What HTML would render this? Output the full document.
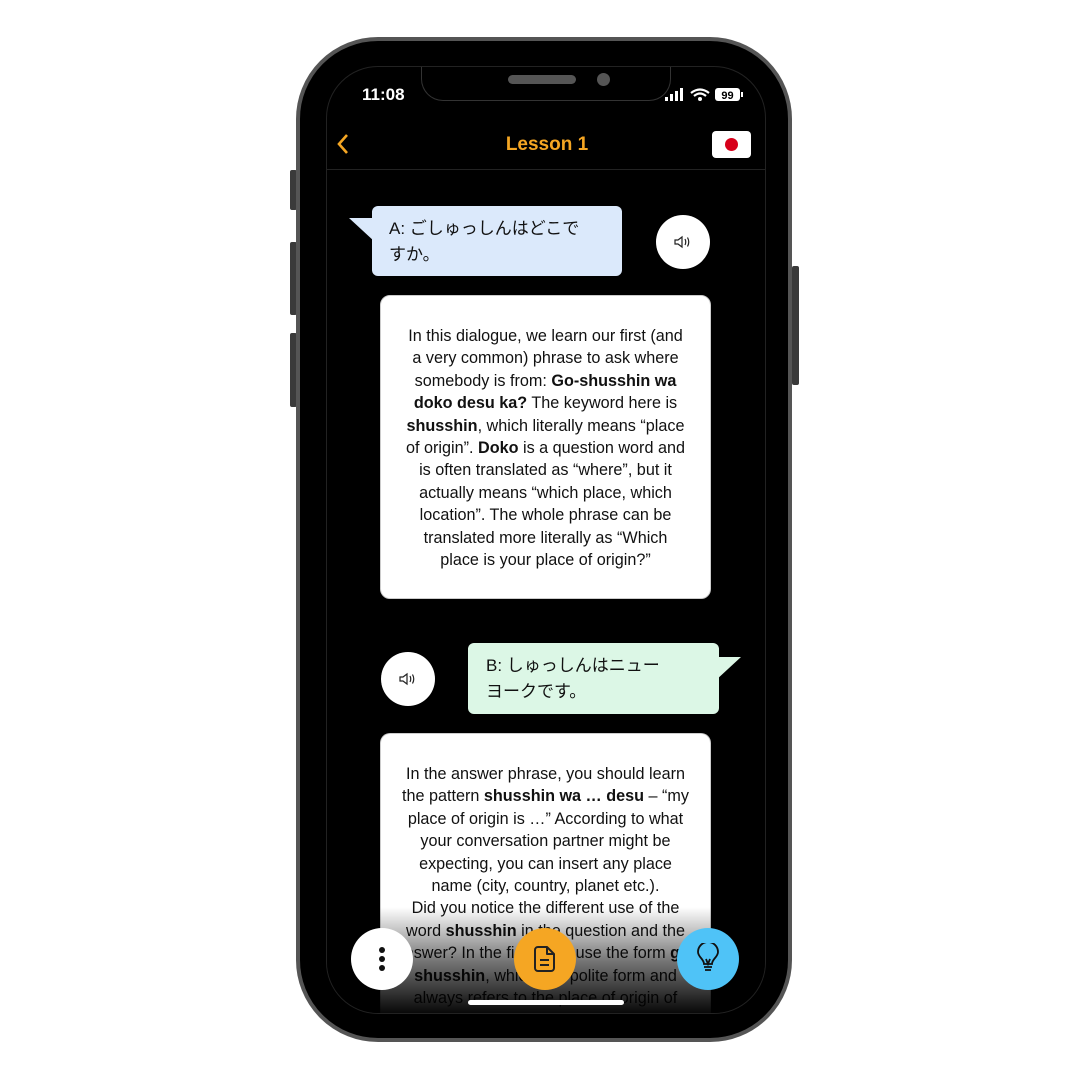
<!DOCTYPE html>
<html><head><meta charset="utf-8"><style>
*{margin:0;padding:0;box-sizing:border-box}
body{width:1080px;height:1080px;background:#fff;position:relative;overflow:hidden;font-family:"Liberation Sans","Noto Sans CJK JP",sans-serif}
.abs{position:absolute}
.phone{left:296px;top:37px;width:496px;height:1005px;border:4px solid #555;border-radius:82px;background:#000}
.btn{background:#3a3a3a;width:7px;border-radius:2px}
.screen{left:326px;top:66px;width:440px;height:948px;background:#000;border-radius:52px;overflow:hidden;border:1px solid #222}
.card{background:#fff;border-radius:10px;border:1px solid #ccc;color:#111;font-size:16.2px;line-height:22.4px;text-align:center;letter-spacing:0;white-space:nowrap}
.circ{border-radius:50%;display:flex;align-items:center;justify-content:center}
.jp{font-size:17px;line-height:26px;color:#111;white-space:nowrap}
</style></head><body>
<div class="abs btn" style="left:290px;top:170px;height:40px"></div>
<div class="abs btn" style="left:290px;top:242px;height:73px"></div>
<div class="abs btn" style="left:290px;top:333px;height:74px"></div>
<div class="abs btn" style="left:792px;top:266px;height:119px"></div>
<div class="abs phone"></div>
<div class="abs screen">
 <div class="abs" style="left:94px;top:-2px;width:250px;height:36px;background:#000;border:1px solid #333;border-top:none;border-radius:0 0 22px 22px"></div>
 <div class="abs" style="left:181px;top:8px;width:68px;height:9px;background:#555;border-radius:5px"></div>
 <div class="abs" style="left:270px;top:6px;width:13px;height:13px;background:#555;border-radius:50%"></div>
 <div class="abs" style="left:35px;top:18px;color:#fff;font-size:17px;font-weight:bold">11:08</div>
 <svg class="abs" style="left:338px;top:20px" width="82" height="16" viewBox="0 0 82 16">
  <rect x="0" y="10" width="3" height="4" fill="#fff"/><rect x="5" y="7" width="3" height="7" fill="#fff"/><rect x="10" y="4" width="3" height="10" fill="#fff"/><rect x="15" y="1" width="3" height="13" fill="#fff"/>
  <path d="M26 6 Q35 -1 44 6" stroke="#fff" stroke-width="2.2" fill="none"/><path d="M29 9 Q35 4 41 9" stroke="#fff" stroke-width="2.2" fill="none"/><circle cx="35" cy="12" r="2" fill="#fff"/>
  <rect x="50" y="1" width="25" height="13" rx="3" fill="#fff"/><rect x="76" y="5" width="2" height="5" fill="#fff"/>
  <text x="62.5" y="12" font-size="11" font-weight="bold" text-anchor="middle" fill="#000" font-family="Liberation Sans">99</text>
 </svg>
 <svg class="abs" style="left:8px;top:66px" width="16" height="24"><path d="M12 2 L4 11 L12 20" stroke="#f5a623" stroke-width="2.6" fill="none"/></svg>
 <div class="abs" style="left:0;width:440px;top:67px;text-align:center;color:#f5a623;font-size:19px;font-weight:bold">Lesson 1</div>
 <div class="abs" style="left:385px;top:64px;width:39px;height:27px;background:#fff;border-radius:4px"><div class="abs" style="left:13px;top:7px;width:13px;height:13px;border-radius:50%;background:#d7001a"></div></div>
 <div class="abs" style="left:0;top:102px;width:440px;height:1px;background:#222"></div>

 <svg class="abs" style="left:22px;top:151px" width="30" height="25"><path d="M0 0 L26 0 L26 24 Z" fill="#dbe9fb"/></svg>
 <div class="abs jp" style="left:45px;top:139px;width:250px;height:70px;background:#dbe9fb;border-radius:6px;padding:10px 17px">A: ごしゅっしんはどこで<br>すか。</div>
 <div class="abs circ" style="left:329px;top:148px;width:54px;height:54px;background:#fff"><svg width="18" height="14" viewBox="0 0 18 14"><path d="M1 5 H4 L8 2 V12 L4 9 H1 Z" stroke="#222" stroke-width="1.2" fill="none"/><path d="M11 4 Q12.5 7 11 10 M13.5 2.5 Q16 7 13.5 11.5" stroke="#222" stroke-width="1.2" fill="none"/></svg></div>

 <div class="abs card" style="left:53px;top:228px;width:331px;height:304px;padding:29px 0">In this dialogue, we learn our first (and<br>a very common) phrase to ask where<br>somebody is from: <b>Go-shusshin wa</b><br><b>doko desu ka?</b> The keyword here is<br><b>shusshin</b>, which literally means “place<br>of origin”. <b>Doko</b> is a question word and<br>is often translated as “where”, but it<br>actually means “which place, which<br>location”. The whole phrase can be<br>translated more literally as “Which<br>place is your place of origin?”</div>

 <div class="abs circ" style="left:54px;top:585px;width:54px;height:54px;background:#fff"><svg width="18" height="14" viewBox="0 0 18 14"><path d="M1 5 H4 L8 2 V12 L4 9 H1 Z" stroke="#222" stroke-width="1.2" fill="none"/><path d="M11 4 Q12.5 7 11 10 M13.5 2.5 Q16 7 13.5 11.5" stroke="#222" stroke-width="1.2" fill="none"/></svg></div>
 <svg class="abs" style="left:388px;top:590px" width="28" height="25"><path d="M26 0 L0 0 L0 24 Z" fill="#dcf7e6"/></svg>
 <div class="abs jp" style="left:141px;top:576px;width:251px;height:71px;background:#dcf7e6;border-radius:6px;padding:10px 18px">B: しゅっしんはニュー<br>ヨークです。</div>

 <div class="abs card" style="left:53px;top:666px;width:331px;height:320px;padding:29px 0;border-bottom:none;border-radius:10px 10px 0 0">In the answer phrase, you should learn<br>the pattern <b>shusshin wa … desu</b> – “my<br>place of origin is …” According to what<br>your conversation partner might be<br>expecting, you can insert any place<br>name (city, country, planet etc.).<br>Did you notice the different use of the<br>word <b>shusshin</b> in the question and the<br>answer? In the first case use the form <b>go-</b><br><b>shusshin</b>, which is a polite form and<br>always refers to the place of origin of</div>
 <div class="abs" style="left:0;top:840px;width:440px;height:110px;background:linear-gradient(to bottom,rgba(0,0,0,0),rgba(0,0,0,0.55) 50%,rgba(0,0,0,1) 100%)"></div>

 <div class="abs circ" style="left:24px;top:861px;width:62px;height:62px;background:#fff"><svg width="8" height="26"><circle cx="4" cy="4" r="3" fill="#111"/><circle cx="4" cy="13" r="3" fill="#111"/><circle cx="4" cy="22" r="3" fill="#111"/></svg></div>
 <div class="abs circ" style="left:187px;top:861px;width:62px;height:62px;background:#f5a623"><svg width="22" height="28" viewBox="0 0 22 28"><path d="M4 2 H13 L20 9 V23 A3 3 0 0 1 17 26 H4 A3 3 0 0 1 1 23 V5 A3 3 0 0 1 4 2 Z M13 2 V9 H20" stroke="#222" stroke-width="2" fill="none" stroke-linejoin="round"/><path d="M6 15 H15 M6 20 H15" stroke="#222" stroke-width="2"/></svg></div>
 <div class="abs circ" style="left:350px;top:861px;width:62px;height:62px;background:#4fc3f7"><svg width="24" height="32" viewBox="0 0 24 32"><path d="M8 21 C8 16 2 14 2 9 A10 10 0 0 1 22 9 C22 14 16 16 16 21 Z" stroke="#111" stroke-width="1.8" fill="none"/><path d="M8 24 H16 M9 27 H15 M10 16 L12 21 L14 16" stroke="#111" stroke-width="1.8" fill="none"/></svg></div>
 <div class="abs" style="left:141px;top:933px;width:156px;height:5px;background:#fff;border-radius:3px"></div>
</div>
</body></html>
